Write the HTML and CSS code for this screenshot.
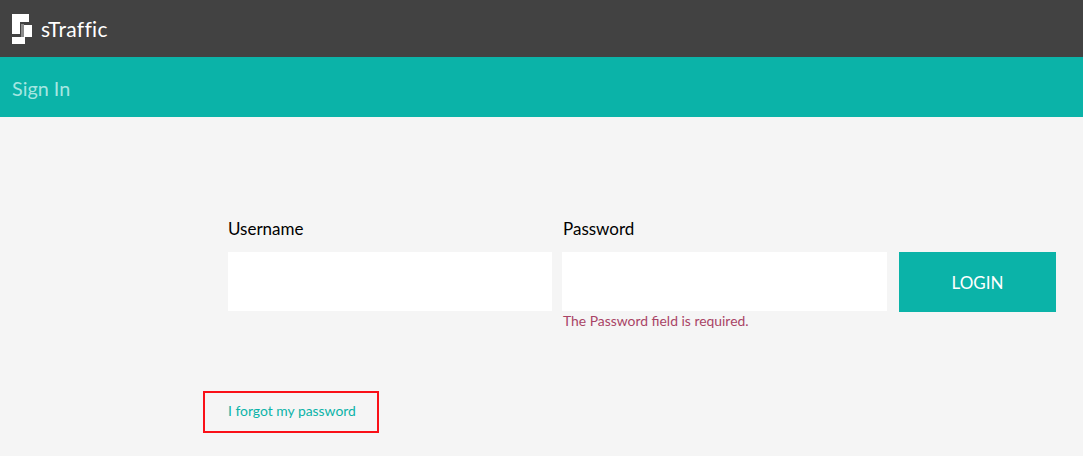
FILE: index.html
```html
<!DOCTYPE html>
<html>
<head>
    <title>sTraffic - Sign In</title>
    <link rel="stylesheet" href="styles.css">
</head>
<body>
    <div class="top-bar">
        <svg class="logo" width="20" height="30" viewBox="0 0 20 30">
            <path fill="#fff" d="M0 0H17V8H8V20H0Z"></path>
            <path fill="#8c8c8c" d="M9 10H12V23H9Z"></path>
            <path fill="#fff" d="M12 11H20V23H13V30H0V23H12Z"></path>
        </svg>
        <span class="brand">sTraffic</span>
    </div>
    <div class="title-bar">Sign In</div>

    <form class="login-form" onsubmit="return false" autocomplete="off">
        <div class="field">
            <label for="username">Username</label>
            <input id="username" type="text">
        </div>
        <div class="field">
            <label for="password">Password</label>
            <input id="password" type="password">
            <span class="field-error">The Password field is required.</span>
        </div>
        <button class="login-button" type="submit">LOGIN</button>
    </form>

    <div class="forgot-box">
        <a href="#">I forgot my password</a>
    </div>
</body>
</html>
```

FILE: styles.css
```css
body {
    margin: 0;
    padding: 0;
    background-color: #f5f5f5;
    font-family: Lato, "Open Sans", sans-serif;
    overflow: hidden;
}

.top-bar {
    display: flex;
    align-items: center;
    gap: 9px;
    height: 57px;
    padding-left: 12px;
    background-color: #424242;
}

.logo {
    flex: none;
}

.brand {
    color: #fff;
    font-size: 21px;
    letter-spacing: 0.3px;
}

.title-bar {
    height: 60px;
    padding-left: 12px;
    line-height: 63px;
    background-color: #0bb3a8;
    color: #a5e6e1;
    font-size: 19.8px;
}

.login-form {
    display: flex;
    margin: 99px 0 0 228px;
}

.field {
    width: 324px;
    margin-right: 10px;
}

.field + .field {
    width: 325px;
    margin-right: 12px;
}

.field label {
    display: block;
    height: 36px;
    line-height: 26px;
    font-size: 17px;
    color: #000;
}

.field + .field label {
    padding-left: 1px;
}

.field input {
    display: block;
    box-sizing: border-box;
    width: 100%;
    height: 59px;
    border: none;
    background-color: #fff;
    outline: none;
}

.field-error {
    display: block;
    margin-top: 1px;
    padding-left: 1px;
    line-height: 18px;
    font-size: 13.9px;
    color: #a94465;
}

.login-button {
    width: 157px;
    height: 60px;
    margin-top: 36px;
    border: none;
    background-color: #0bb3a8;
    color: #fff;
    font-family: inherit;
    font-size: 17px;
    cursor: pointer;
}

.forgot-box {
    box-sizing: border-box;
    width: 176px;
    height: 42px;
    margin: 61px 0 0 203px;
    padding-left: 23px;
    line-height: 34px;
    border: 2px solid #fa1018;
}

.forgot-box a {
    color: #0bb3a8;
    font-size: 13.9px;
    text-decoration: none;
}
```
